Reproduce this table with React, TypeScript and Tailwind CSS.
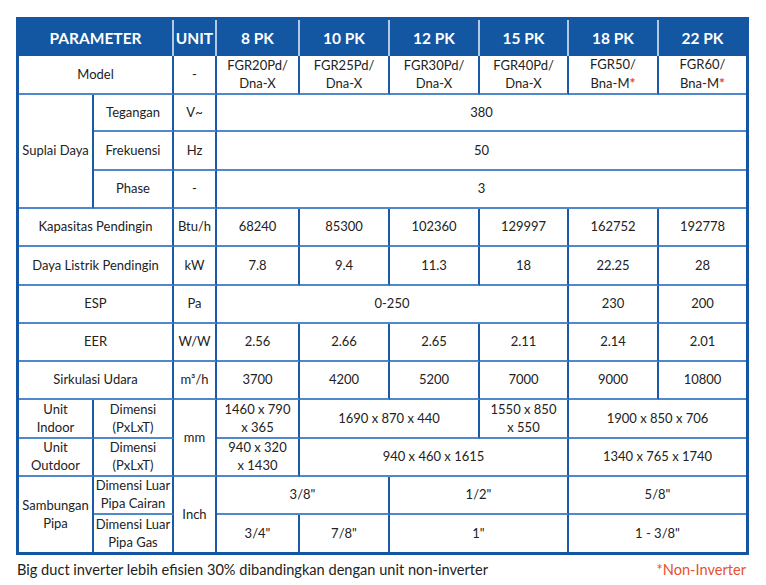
import React from "react";

type Cell = {
  text: React.ReactNode;
  className: string;
};

const star = <span className="text-[#e8452c] font-bold text-[14px]">*</span>;

const head = "bg-[#1356a2] text-white font-bold text-[15.5px] border-r-2 border-r-[#b3c8e4]";

// body cells: darker vertical rules, lighter horizontal ones
const body = "bg-white text-[#222] text-[13px] border-r-2 border-r-[#1a5aa8] border-b-2 border-b-[#4f89cc]";

const cells: Cell[] = [
  // header
  { text: "PARAMETER", className: `${head} col-start-1 col-span-2 row-start-1` },
  { text: "UNIT", className: `${head} col-start-3 row-start-1` },
  { text: "8 PK", className: `${head} col-start-4 row-start-1` },
  { text: "10 PK", className: `${head} col-start-5 row-start-1` },
  { text: "12 PK", className: `${head} col-start-6 row-start-1` },
  { text: "15 PK", className: `${head} col-start-7 row-start-1` },
  { text: "18 PK", className: `${head} col-start-8 row-start-1` },
  { text: "22 PK", className: `${head} col-start-9 row-start-1` },

  // model
  { text: "Model", className: `${body} col-start-1 col-span-2 row-start-2` },
  { text: "-", className: `${body} col-start-3 row-start-2` },
  { text: <>FGR20Pd/<br />Dna-X</>, className: `${body} col-start-4 row-start-2` },
  { text: <>FGR25Pd/<br />Dna-X</>, className: `${body} col-start-5 row-start-2` },
  { text: <>FGR30Pd/<br />Dna-X</>, className: `${body} col-start-6 row-start-2` },
  { text: <>FGR40Pd/<br />Dna-X</>, className: `${body} col-start-7 row-start-2` },
  { text: <>FGR50/<br />Bna-M{star}</>, className: `${body} col-start-8 row-start-2` },
  { text: <>FGR60/<br />Bna-M{star}</>, className: `${body} col-start-9 row-start-2` },

  // suplai daya
  { text: "Suplai Daya", className: `${body} col-start-1 row-start-3 row-span-3` },
  { text: "Tegangan", className: `${body} col-start-2 row-start-3` },
  { text: "V~", className: `${body} col-start-3 row-start-3` },
  { text: "380", className: `${body} col-start-4 col-span-6 row-start-3` },
  { text: "Frekuensi", className: `${body} col-start-2 row-start-4` },
  { text: "Hz", className: `${body} col-start-3 row-start-4` },
  { text: "50", className: `${body} col-start-4 col-span-6 row-start-4` },
  { text: "Phase", className: `${body} col-start-2 row-start-5` },
  { text: "-", className: `${body} col-start-3 row-start-5` },
  { text: "3", className: `${body} col-start-4 col-span-6 row-start-5` },

  // kapasitas
  { text: "Kapasitas Pendingin", className: `${body} col-start-1 col-span-2 row-start-6` },
  { text: "Btu/h", className: `${body} col-start-3 row-start-6` },
  { text: "68240", className: `${body} col-start-4 row-start-6` },
  { text: "85300", className: `${body} col-start-5 row-start-6` },
  { text: "102360", className: `${body} col-start-6 row-start-6` },
  { text: "129997", className: `${body} col-start-7 row-start-6` },
  { text: "162752", className: `${body} col-start-8 row-start-6` },
  { text: "192778", className: `${body} col-start-9 row-start-6` },

  // daya listrik
  { text: "Daya Listrik Pendingin", className: `${body} col-start-1 col-span-2 row-start-7` },
  { text: "kW", className: `${body} col-start-3 row-start-7` },
  { text: "7.8", className: `${body} col-start-4 row-start-7` },
  { text: "9.4", className: `${body} col-start-5 row-start-7` },
  { text: "11.3", className: `${body} col-start-6 row-start-7` },
  { text: "18", className: `${body} col-start-7 row-start-7` },
  { text: "22.25", className: `${body} col-start-8 row-start-7` },
  { text: "28", className: `${body} col-start-9 row-start-7` },

  // esp
  { text: "ESP", className: `${body} col-start-1 col-span-2 row-start-8` },
  { text: "Pa", className: `${body} col-start-3 row-start-8` },
  { text: "0-250", className: `${body} col-start-4 col-span-4 row-start-8` },
  { text: "230", className: `${body} col-start-8 row-start-8` },
  { text: "200", className: `${body} col-start-9 row-start-8` },

  // eer
  { text: "EER", className: `${body} col-start-1 col-span-2 row-start-9` },
  { text: "W/W", className: `${body} col-start-3 row-start-9` },
  { text: "2.56", className: `${body} col-start-4 row-start-9` },
  { text: "2.66", className: `${body} col-start-5 row-start-9` },
  { text: "2.65", className: `${body} col-start-6 row-start-9` },
  { text: "2.11", className: `${body} col-start-7 row-start-9` },
  { text: "2.14", className: `${body} col-start-8 row-start-9` },
  { text: "2.01", className: `${body} col-start-9 row-start-9` },

  // sirkulasi
  { text: "Sirkulasi Udara", className: `${body} col-start-1 col-span-2 row-start-10` },
  { text: "m³/h", className: `${body} col-start-3 row-start-10` },
  { text: "3700", className: `${body} col-start-4 row-start-10` },
  { text: "4200", className: `${body} col-start-5 row-start-10` },
  { text: "5200", className: `${body} col-start-6 row-start-10` },
  { text: "7000", className: `${body} col-start-7 row-start-10` },
  { text: "9000", className: `${body} col-start-8 row-start-10` },
  { text: "10800", className: `${body} col-start-9 row-start-10` },

  // dimensi unit
  { text: <>Unit<br />Indoor</>, className: `${body} col-start-1 row-start-11` },
  { text: <>Dimensi<br />(PxLxT)</>, className: `${body} col-start-2 row-start-11` },
  { text: "mm", className: `${body} col-start-3 row-start-11 row-span-2` },
  { text: <>1460 x 790<br />x 365</>, className: `${body} col-start-4 row-start-11` },
  { text: "1690 x 870 x 440", className: `${body} col-start-5 col-span-2 row-start-11` },
  { text: <>1550 x 850<br />x 550</>, className: `${body} col-start-7 row-start-11` },
  { text: "1900 x 850 x 706", className: `${body} col-start-8 col-span-2 row-start-11` },
  { text: <>Unit<br />Outdoor</>, className: `${body} col-start-1 row-start-12` },
  { text: <>Dimensi<br />(PxLxT)</>, className: `${body} col-start-2 row-start-12` },
  { text: <>940 x 320<br />x 1430</>, className: `${body} col-start-4 row-start-12` },
  { text: "940 x 460 x 1615", className: `${body} col-start-5 col-span-3 row-start-12` },
  { text: "1340 x 765 x 1740", className: `${body} col-start-8 col-span-2 row-start-12` },

  // sambungan pipa
  { text: <>Sambungan<br />Pipa</>, className: `${body} col-start-1 row-start-13 row-span-2` },
  { text: <>Dimensi Luar<br />Pipa Cairan</>, className: `${body} col-start-2 row-start-13` },
  { text: "Inch", className: `${body} col-start-3 row-start-13 row-span-2` },
  { text: '3/8"', className: `${body} col-start-4 col-span-2 row-start-13` },
  { text: '1/2"', className: `${body} col-start-6 col-span-2 row-start-13` },
  { text: '5/8"', className: `${body} col-start-8 col-span-2 row-start-13` },
  { text: <>Dimensi Luar<br />Pipa Gas</>, className: `${body} col-start-2 row-start-14` },
  { text: '3/4"', className: `${body} col-start-4 row-start-14` },
  { text: '7/8"', className: `${body} col-start-5 row-start-14` },
  { text: '1"', className: `${body} col-start-6 col-span-2 row-start-14` },
  { text: '1 - 3/8"', className: `${body} col-start-8 col-span-2 row-start-14` },
];

export default function App() {
  return (
    <div className="w-[766px] h-[585px] bg-white font-['Lato','Open_Sans',sans-serif]">
      <div className="ml-[16px] mt-[17px] w-[733px] border-[3px] border-[#1456a3] overflow-hidden">
        <div className="grid w-[729px] grid-cols-[75px_80px_43px_83px_90px_90px_89px_90px_89px] grid-rows-[36px_39px_37px_39px_38px_38px_39px_38px_38px_38px_39px_38px_38px_39px] -mb-[2px]">
          {cells.map((c, i) => (
            <div
              key={i}
              className={`flex items-center justify-center text-center leading-[1.35] ${c.className}`}
            >
              <div>{c.text}</div>
            </div>
          ))}
        </div>
      </div>
      <div className="flex justify-between pl-[17px] pr-[20px] mt-[4px] text-[14.6px]">
        <span className="text-[#222]">
          Big duct inverter lebih efisien 30% dibandingkan dengan unit non-inverter
        </span>
        <span className="text-[#e8502e]">*Non-Inverter</span>
      </div>
    </div>
  );
}
